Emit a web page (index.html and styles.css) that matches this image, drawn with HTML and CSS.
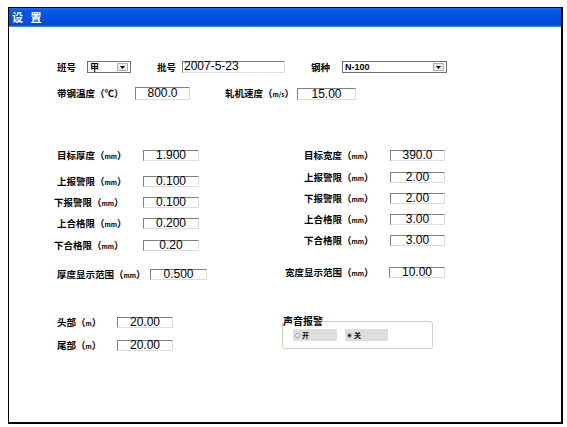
FILE: index.html
```html
<!DOCTYPE html>
<html>
<head>
<meta charset="utf-8">
<title>设置</title>
<link rel="stylesheet" href="styles.css">
</head>
<body>
<div class="window">
  <div class="titlebar">设 置</div>
  <div class="content">
    <div class="row r1">
      <span class="lbl w-ban">班号</span>
      <div class="combo c-ban"><span class="ctext">甲</span><span class="cbtn"><svg width="5" height="3" viewBox="0 0 5 3"><path d="M0 0H5L2.5 3Z" fill="#000"/></svg></span></div>
      <span class="lbl w-pi">批号</span>
      <div class="box txt b-pi">2007-5-23</div>
      <span class="lbl w-gang">钢种</span>
      <div class="combo c-gang"><span class="ctext latin">N-100</span><span class="cbtn"><svg width="5" height="3" viewBox="0 0 5 3"><path d="M0 0H5L2.5 3Z" fill="#000"/></svg></span></div>
    </div>
    <div class="row r2">
      <span class="lbl w-temp">带钢温度（℃）</span>
      <div class="box b-temp">800.0</div>
      <span class="lbl w-speed">轧机速度（<span class="u">m/s</span>）</span>
      <div class="box b-speed">15.00</div>
    </div>
    <div class="cols">
      <div class="col left">
        <div class="row"><span class="lbl lw">目标厚度（<span class="u">mm</span>）</span><div class="box bw">1.900</div></div>
        <div class="row m15"><span class="lbl lw">上报警限（<span class="u">mm</span>）</span><div class="box bw">0.100</div></div>
        <div class="row m10"><span class="lbl lw sh">下报警限（<span class="u">mm</span>）</span><div class="box bw">0.100</div></div>
        <div class="row m10"><span class="lbl lw">上合格限（<span class="u">mm</span>）</span><div class="box bw">0.200</div></div>
        <div class="row m11"><span class="lbl lw sh">下合格限（<span class="u">mm</span>）</span><div class="box bw">0.20</div></div>
        <div class="row m18"><span class="lbl lw6">厚度显示范围（<span class="u">mm</span>）</span><div class="box bw6">0.500</div></div>
      </div>
      <div class="col right">
        <div class="row"><span class="lbl lw">目标宽度（<span class="u">mm</span>）</span><div class="box bwr">390.0</div></div>
        <div class="row m11"><span class="lbl lw">上报警限（<span class="u">mm</span>）</span><div class="box bwr">2.00</div></div>
        <div class="row m10"><span class="lbl lw">下报警限（<span class="u">mm</span>）</span><div class="box bwr">2.00</div></div>
        <div class="row m10"><span class="lbl lw">上合格限（<span class="u">mm</span>）</span><div class="box bwr">3.00</div></div>
        <div class="row m10"><span class="lbl lw">下合格限（<span class="u">mm</span>）</span><div class="box bwr">3.00</div></div>
        <div class="row m21"><span class="lbl lwr6">宽度显示范围（<span class="u">mm</span>）</span><div class="box bwr6">10.00</div></div>
      </div>
    </div>
    <div class="bottom">
      <div class="hb">
        <div class="row"><span class="lbl lhb">头部（<span class="u">m</span>）</span><div class="box bw">20.00</div></div>
        <div class="row m12"><span class="lbl lhb">尾部（<span class="u">m</span>）</span><div class="box bw">20.00</div></div>
      </div>
      <div class="group">
        <span class="legend">声音报警</span>
        <div class="radios">
          <div class="rb rb1"><span class="dot"></span><span>开</span></div>
          <div class="rb rb2"><span class="dot on"></span><span>关</span></div>
        </div>
      </div>
    </div>
  </div>
</div>
</body>
</html>
```

FILE: styles.css
```css
* { box-sizing: border-box; }
html, body { margin: 0; padding: 0; background: #fff; }
body { font-family: "Noto Sans CJK SC", "Noto Sans", sans-serif; color: #000; }

.window {
  margin: 7px 0 0 8px;
  width: 555px;
  height: 417px;
  border-top: 1px solid #000;
  border-left: 1px solid #000;
  border-right: 2px solid #000;
  border-bottom: 2px solid #000;
  background: #fff;
}

.titlebar {
  height: 19px;
  background: linear-gradient(#1a6cf2 0%, #0758e6 15%, #0052e0 45%, #004fdc 75%, #0047cf 90%, #4f96f5 100%);
  color: #fff;
  font-weight: 700;
  font-size: 11px;
  line-height: 19px;
  padding-left: 3px;
  word-spacing: 5px;
  white-space: pre;
}

.content { padding-left: 0; }

.row { display: flex; align-items: center; height: 11px; }

.lbl {
  font-size: 9.5px;
  font-weight: 700;
  line-height: 11px;
  white-space: nowrap;
  flex: none;
}
.u { font-size: 6.5px; }

.box {
  flex: none;
  height: 11px;
  border: 1px solid;
  border-color: #808080 #dcdcdc #dcdcdc #808080;
  background: #fff;
  font-family: "Liberation Sans", Arial, sans-serif;
  font-size: 12px;
  line-height: 9px;
  text-align: center;
  color: #000;
  overflow: visible;
}
.box.txt { text-align: left; padding-left: 1px; }

/* row 1 */
.r1 { margin-top: 34px; height: 12px; padding-left: 48px; }
.w-ban { width: 30px; }
.c-ban { width: 44px; }
.w-pi { margin-left: 26px; width: 25px; }
.b-pi { width: 103px; height: 12px; }
.w-gang { margin-left: 26px; width: 31px; }
.c-gang { width: 105px; }

.combo {
  flex: none;
  height: 12px;
  border: 1px solid #707070;
  background: #fff;
  display: flex;
  align-items: center;
  padding: 1px 2px 1px 2px;
}
.ctext { flex: 1; font-size: 9px; font-weight: 700; line-height: 9px; }
.ctext.latin { font-family: "Liberation Sans", Arial, sans-serif; font-size: 9px; }
.cbtn {
  flex: none;
  width: 11px;
  height: 8px;
  background: #ececec;
  border: 1px solid #b0b0b0;
  display: flex;
  align-items: center;
  justify-content: center;
}
.cbtn svg { display: block; }

/* row 2 */
.r2 { margin-top: 14px; height: 13px; padding-left: 48px; }
.w-temp { width: 78px; }
.b-temp { width: 55px; height: 13px; line-height: 11px; }
.w-speed { margin-left: 35px; width: 72px; }
.b-speed { width: 59px; height: 12px; line-height: 10px; }

/* columns */
.cols { display: flex; margin-top: 50px; }
.col { display: flex; flex-direction: column; }
.col.left { width: 271px; padding-left: 48px; }
.col.right { padding-left: 24px; }

.m10 { margin-top: 10px; }
.m11 { margin-top: 11px; }
.m12 { margin-top: 12px; }
.m15 { margin-top: 15px; }
.m18 { margin-top: 18px; }
.m21 { margin-top: 21px; }

.lw { width: 86px; }
.lw.sh { margin-left: -3px; width: 89px; }
.bw { width: 56px; }
.lw6 { width: 93px; }
.bw6 { width: 57px; }
.bwr { width: 55px; }
.lwr6 { margin-left: -19px; width: 104px; }
.bwr6 { width: 56px; }

/* bottom */
.bottom { display: flex; margin-top: 37px; }
.hb { width: 273px; padding-left: 48px; display: flex; flex-direction: column; }
.lhb { width: 60px; }

.group {
  margin-top: 4px;
  width: 151px;
  height: 28px;
  border: 1px solid #d0d0bf;
  border-radius: 3px;
}
.legend {
  display: block;
  width: max-content;
  margin-top: -7px;
  background: #fff;
  font-size: 10px;
  font-weight: 700;
  line-height: 11px;
  padding-right: 1px;
}
.radios { display: flex; margin-top: 3px; margin-left: 10px; gap: 8px; }
.rb {
  display: flex;
  align-items: center;
  height: 12px;
  background: #dedede;
  padding-left: 2px;
  gap: 2px;
  font-size: 7px;
  font-weight: 700;
  line-height: 8px;
}
.rb1 { width: 44px; }
.rb2 { width: 43px; }
.dot {
  width: 5px;
  height: 5px;
  border-radius: 50%;
  border: 1px solid #9a9a9a;
  background: #fff;
}
.dot.on { background: radial-gradient(circle, #222 0 1.2px, #fff 1.6px); }
```
